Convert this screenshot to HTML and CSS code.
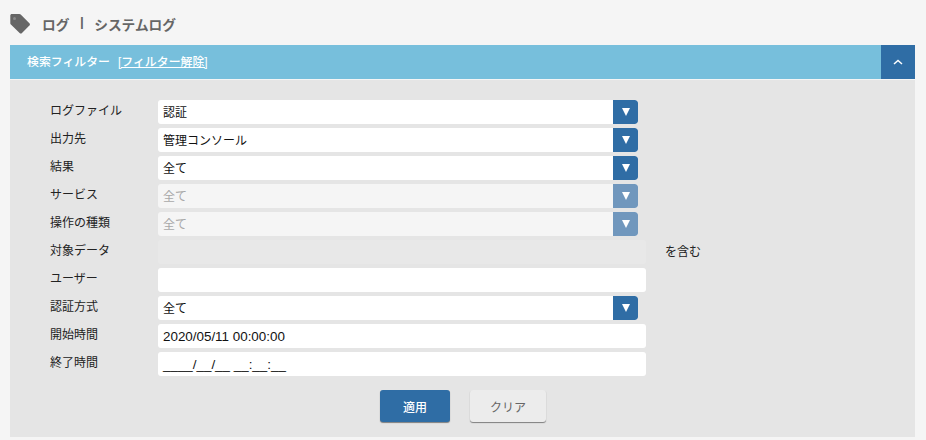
FILE: index.html
```html
<!DOCTYPE html>
<html lang="ja">
<head>
<meta charset="utf-8">
<title>システムログ</title>
<link rel="stylesheet" href="styles.css">
</head>
<body>
<header class="page-title">
  <svg class="tag" width="20" height="20" viewBox="0 0 20 20"><path fill="#666" d="M.3 1.5C.3.7 1 0 1.800 0H9.400c.5 0 1 .2 1.300 .5l8.700 8.700c.7.7.7 1.700 0 2.400l-7.400 7.400c-.7.7-1.700.7-2.400 0L.9 10.500C.5 10.200.3 9.700.3 9.200V1.500z"/><circle cx="4.500" cy="4.500" r="1.500" fill="#8a8a8a"/></svg>
  <h1 class="title-text"><span>ログ</span><span class="sep">|</span><span>システムログ</span></h1>
</header>
<section class="panel">
  <div class="panel-head">
    <div class="panel-title">検索フィルター<a class="clear-link" href="#">[フィルター解除]</a></div>
    <button class="toggle" type="button" aria-label="閉じる"><svg width="10" height="6" viewBox="0 0 10 6"><path d="M1 5l4-3.500L9 5" fill="none" stroke="#fff" stroke-width="1.500"/></svg></button>
  </div>
  <form class="panel-body">
    <div class="row"><label class="lbl">ログファイル</label><div class="select"><span class="val">認証</span><span class="arrow"></span></div></div>
    <div class="row"><label class="lbl">出力先</label><div class="select"><span class="val">管理コンソール</span><span class="arrow"></span></div></div>
    <div class="row"><label class="lbl">結果</label><div class="select"><span class="val">全て</span><span class="arrow"></span></div></div>
    <div class="row"><label class="lbl">サービス</label><div class="select disabled"><span class="val">全て</span><span class="arrow"></span></div></div>
    <div class="row"><label class="lbl">操作の種類</label><div class="select disabled"><span class="val">全て</span><span class="arrow"></span></div></div>
    <div class="row"><label class="lbl">対象データ</label><div class="input off"></div><span class="suffix">を含む</span></div>
    <div class="row"><label class="lbl">ユーザー</label><div class="input"></div></div>
    <div class="row"><label class="lbl">認証方式</label><div class="select"><span class="val">全て</span><span class="arrow"></span></div></div>
    <div class="row"><label class="lbl">開始時間</label><div class="input">2020/05/11 00:00:00</div></div>
    <div class="row"><label class="lbl">終了時間</label><div class="input">____/__/__ __:__:__</div></div>
    <div class="actions">
      <button class="btn primary" type="button">適用</button>
      <button class="btn" type="button">クリア</button>
    </div>
  </form>
</section>
</body>
</html>
```
FILE: styles.css
```css
* { box-sizing: border-box; }
html, body { margin: 0; height: 100%; }
body {
  background: #f5f5f5;
  font-family: "Liberation Sans", "Noto Sans CJK JP", sans-serif;
  font-size: 12px;
  color: #222;
  padding: 0 11px 0 10px;
  overflow: hidden;
}
.page-title {
  height: 45px;
  display: flex;
  align-items: center;
  padding-top: 3px;
  gap: 12px;
}
.tag { display: block; margin-top: -1px; }
.title-text {
  margin: 0;
  font-size: 13.700px;
  font-weight: 700;
  color: #666;
  display: flex;
  gap: 10.500px;
}
.panel-head {
  height: 34px;
  background: #77bfdc;
  display: flex;
  justify-content: space-between;
  color: #fff;
}
.panel-title {
  font-size: 11.900px;
  font-weight: 500;
  padding-left: 17px;
  line-height: 35px;
}
.clear-link { color: #fff; margin-left: 8px; text-decoration: underline; }
.toggle {
  width: 34px;
  border: 0;
  padding: 0;
  background: #2f6da5;
  display: flex;
  align-items: center;
  justify-content: center;
}
.panel-body {
  margin-top: 1px;
  background: #e5e5e5;
  height: 357px;
  padding: 20px 0 0 40px;
  display: flex;
  flex-direction: column;
  gap: 4px;
}
.row { display: flex; height: 24px; align-items: flex-start; }
.lbl { width: 108px; line-height: 22px; color: #222; }
.select {
  width: 480px;
  height: 24px;
  background: #fff;
  border-radius: 3px;
  display: flex;
  justify-content: space-between;
  overflow: hidden;
}
.val { padding-left: 5px; line-height: 27px; color: #111; }
.arrow {
  width: 25px;
  background: #2f6da5;
  border-radius: 0 3px 3px 0;
  display: flex;
  align-items: center;
  justify-content: center;
}
.arrow::after {
  content: "";
  border-left: 4.500px solid transparent;
  border-right: 4.500px solid transparent;
  border-top: 8px solid #fff;
}
.select.disabled { background: #f5f5f5; }
.select.disabled .val { color: #a8a8a8; }
.select.disabled .arrow { background: #7097bd; }
.input {
  width: 488px;
  height: 24px;
  background: #fff;
  border-radius: 3px;
  padding-left: 5px;
  line-height: 26px;
  font-size: 13.400px;
  color: #111;
}
.input.off { background: #e8e8e8; }
.suffix { margin-left: 19px; line-height: 24px; }
.actions {
  display: flex;
  gap: 20px;
  margin-top: 10px;
  padding-left: 330px;
}
.btn {
  width: 76px;
  height: 32px;
  border: 0;
  border-radius: 3px;
  background: #ececec;
  color: #666;
  font: inherit;
  box-shadow: 0 1px 1px rgba(0, 0, 0, .45);
}
.btn.primary { width: 70px; background: #2f6da5; color: #fff; font-weight: 500; }
```
